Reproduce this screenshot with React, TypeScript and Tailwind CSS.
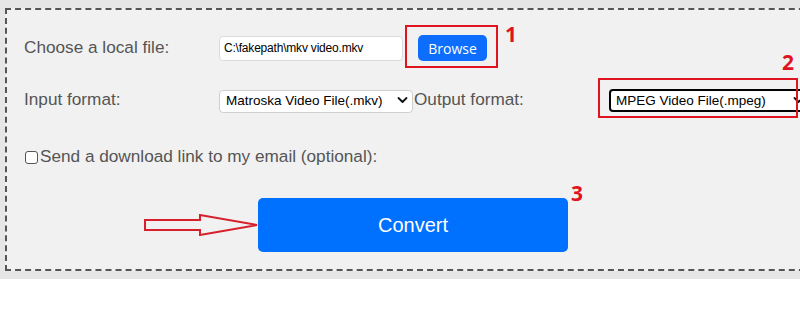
import React from 'react';

const Chevron: React.FC = () => (
  <svg width="11" height="7" viewBox="0 0 11 7" className="pointer-events-none absolute right-[5px] top-1/2 -translate-y-1/2">
    <path d="M1.5 1.5 L5.5 5.5 L9.5 1.5" fill="none" stroke="#111" strokeWidth="1.8" strokeLinecap="round" strokeLinejoin="round" />
  </svg>
);

const App: React.FC = () => {
  return (
    <div className="w-[800px] h-[310px] overflow-hidden bg-white font-['Liberation_Sans',Arial,sans-serif]">
      <div className="h-[279px] bg-[#e6e6e6] pt-[8px] pl-[5px]">
        {/* Converter form */}
        <div className="relative w-[830px] h-[263px] border-2 border-dashed border-[#555] bg-[#f1f1f1]">
          {/* File row */}
          <div className="flex items-center h-[26px] mt-[25px]">
            <label className="w-[212px] pl-[17px] text-[17.2px] text-[#555]">Choose a local file:</label>
            <div className="w-[184px] h-[25px] flex items-center bg-white border border-[#dcdcdc] rounded-[4px] px-[4px] text-[12px] text-black tracking-[-0.2px]">
              C:\fakepath\mkv video.mkv
            </div>
            <button className="ml-[15px] w-[69px] h-[26px] bg-[#0d6efd] rounded-[5px] text-white text-[14px] font-medium font-['Open_Sans',sans-serif]">
              Browse
            </button>
          </div>

          {/* Format row */}
          <div className="flex items-center h-[23px] mt-[27px]">
            <label className="w-[212px] pl-[17px] text-[17.2px] text-[#555]">Input format:</label>
            <div className="relative w-[194px] h-[23px]">
              <select className="appearance-none w-full h-full bg-white border border-[#cfcfcf] rounded-[4px] pl-[6px] text-[13.5px] text-black outline-none" defaultValue="mkv">
                <option value="mkv">Matroska Video File(.mkv)</option>
              </select>
              <Chevron />
            </div>
            <label className="w-[196px] pl-[1px] text-[17.2px] text-[#555]">Output format:</label>
            <div className="relative w-[200px] h-[23px]">
              <select className="appearance-none w-full h-full bg-white border-2 border-black rounded-[4px] pl-[5px] text-[13.5px] text-black outline-none" defaultValue="mpeg">
                <option value="mpeg">MPEG Video File(.mpeg)</option>
              </select>
              <Chevron />
            </div>
          </div>

          {/* Email row */}
          <div className="flex items-center h-[20px] mt-[36px] pl-[18px]">
            <input type="checkbox" className="appearance-none w-[13px] h-[13px] m-0 bg-white border border-[#555] rounded-[3px]" />
            <label className="ml-[2px] text-[17.2px] text-[#555]">Send a download link to my email (optional):</label>
          </div>

          {/* Convert row */}
          <div className="flex items-center mt-[31px] pl-[137px]">
            <svg width="114" height="22" viewBox="0 0 114 22">
              <polygon points="1,6 56,6 56,1 113,11 56,21 56,16 1,16" fill="none" stroke="#d7202b" strokeWidth="2" />
            </svg>
            <button className="w-[310px] h-[54px] bg-[#0070ff] rounded-[5px] text-white text-[20px]">Convert</button>
          </div>

          {/* Annotations */}
          <div className="absolute left-[398px] top-[15px] w-[93px] h-[43px] border-2 border-[#e0141e]" />
          <span className="absolute left-[498px] top-[14px] text-[21px] leading-none font-bold text-[#e0141e] font-['Open_Sans',sans-serif]">1</span>
          <div className="absolute left-[591px] top-[68px] w-[200px] h-[40px] border-2 border-[#e0141e]" />
          <span className="absolute left-[775px] top-[42px] text-[21px] leading-none font-bold text-[#e0141e] font-['Open_Sans',sans-serif]">2</span>
          <span className="absolute left-[564px] top-[173px] text-[21px] leading-none font-bold text-[#e0141e] font-['Open_Sans',sans-serif]">3</span>
        </div>
      </div>
    </div>
  );
};

export default App;
